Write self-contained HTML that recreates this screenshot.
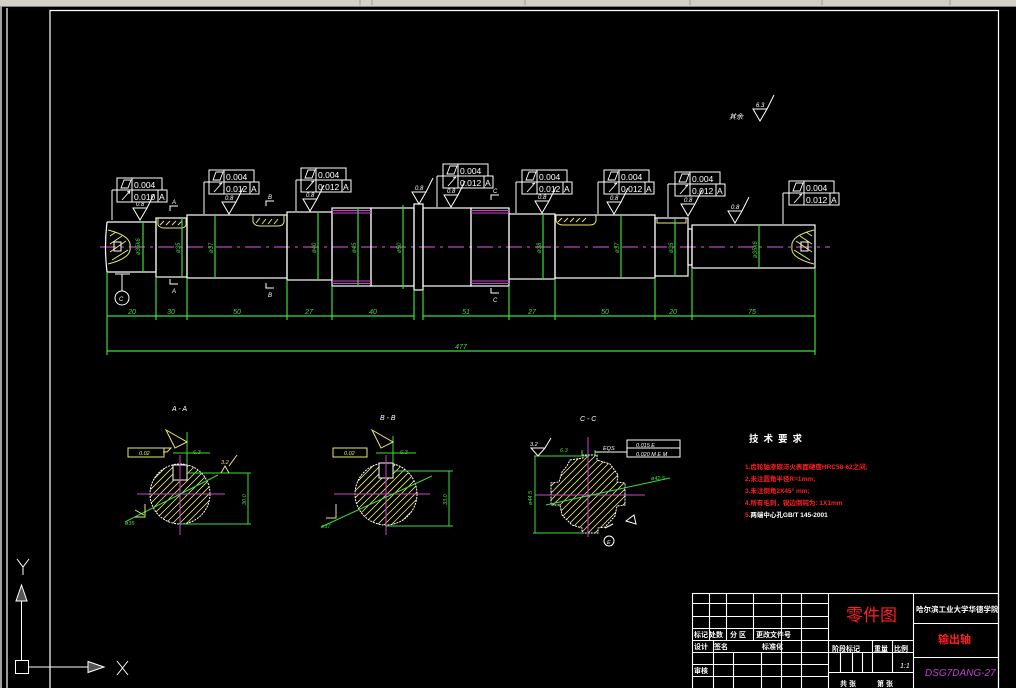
<!DOCTYPE html>
<html><head><meta charset="utf-8"><style>
html,body{margin:0;padding:0;background:#000;overflow:hidden}
svg{display:block}
text{font-family:"Liberation Sans","Noto Sans CJK SC",sans-serif}
</style></head><body>
<svg width="1016" height="688" viewBox="0 0 1016 688" xmlns="http://www.w3.org/2000/svg">
<rect width="1016" height="688" fill="#000"/>
<rect x="0" y="0" width="1016" height="6" fill="#d4d0c8"/>
<rect x="0" y="6" width="1016" height="1" fill="#808080"/>
<g stroke="#9a9a9a" stroke-width="1"><line x1="360" y1="0" x2="360" y2="5"/><line x1="372" y1="0" x2="372" y2="5"/><line x1="525" y1="0" x2="525" y2="5"/><line x1="690" y1="0" x2="690" y2="5"/><line x1="822" y1="0" x2="822" y2="5"/><line x1="950" y1="0" x2="950" y2="5"/></g>
<rect x="0" y="6" width="2" height="682" fill="#a0a0a0"/>
<g stroke="#fff" stroke-width="1.2" fill="none">
<line x1="7" y1="8" x2="7" y2="688"/>
<polyline points="50,688 50,10.5 998.5,10.5 998.5,688"/>
</g>
<g stroke="#fff" stroke-width="1" fill="none">
<rect x="15.5" y="660.5" width="13" height="13"/>
<line x1="21.5" y1="660" x2="21.5" y2="601"/>
<polygon points="21.5,585 16,601 27,601" fill="#555"/>
<line x1="28" y1="667" x2="88" y2="667"/>
<polygon points="104,667 88,661.5 88,672.5" fill="#555"/>
<path d="M17,559 L23,567 L29,559 M23,567 L23,575"/>
<path d="M117,661 L128,675 M128,661 L117,675"/>
</g>

<line x1="100" y1="247" x2="830" y2="247" stroke="#c040c0" stroke-width="1.2" stroke-dasharray="16,5,3,5"/>

<g stroke="#fff" stroke-width="1.2" fill="none">
<path d="M107,222 H156 V272 H107"/>
<path d="M107,222 Q104,247 107,272"/>
<rect x="156" y="218" width="31" height="59"/>
<rect x="187" y="215" width="100" height="63"/>
<rect x="287" y="212" width="45" height="68"/>
<rect x="332" y="208" width="39" height="78"/>
<rect x="371" y="208" width="43" height="78"/>
<rect x="414" y="204" width="9" height="86"/>
<rect x="423" y="208" width="48" height="78"/>
<rect x="471" y="208" width="38" height="78"/>
<rect x="509" y="214" width="46" height="65"/>
<rect x="555" y="215" width="100" height="63"/>
<rect x="655" y="218" width="33" height="58"/>
<rect x="688" y="229" width="4" height="36"/>
<rect x="692" y="225" width="123" height="43"/>
</g>
<g stroke="#e8e870" stroke-width="1" fill="none">
<path d="M108,230 Q132,236 130,247 Q132,258 108,264"/>
<path d="M110,236 L116,232 M110,244 L122,236 M110,252 L126,241 M112,260 L128,250"/>
<rect x="114" y="242" width="7" height="9" stroke="#fff"/>
<path d="M814,230 Q790,236 792,247 Q790,258 814,264"/>
<path d="M812,236 L806,232 M812,244 L800,236 M812,252 L796,241 M810,260 L794,250"/>
<rect x="801" y="242" width="7" height="9" stroke="#fff"/>
</g>
<g stroke="#e8e870" stroke-width="1" fill="none">
<path d="M158,218 V225 Q160,228 164,228 H181 Q185,228 186,225 V218"/>
<path d="M253,215 V222 Q255,226 260,226 H278 Q283,226 284,222 V215"/>
<path d="M556,215 V221 Q558,225 563,225 H590 Q595,225 596,221 V215"/>
<path d="M657,218 V223 H686 V218"/>
<path d="M160,225 L164,221 M166,225 L170,221 M172,225 L176,221 M178,225 L182,221 M256,223 L260,218 M262,224 L266,219 M268,224 L272,219 M274,224 L278,219 M558,222 L562,218 M564,222 L568,218 M570,222 L574,218 M576,222 L580,218 M582,222 L586,218"/>
</g>
<g stroke="#d040d0" stroke-width="1">
<line x1="332" y1="210.5" x2="371" y2="210.5"/><line x1="332" y1="213" x2="371" y2="213"/>
<line x1="332" y1="283.5" x2="371" y2="283.5"/><line x1="332" y1="281" x2="371" y2="281"/>
<line x1="471" y1="210.5" x2="509" y2="210.5"/><line x1="471" y1="213" x2="509" y2="213"/>
<line x1="471" y1="283.5" x2="509" y2="283.5"/><line x1="471" y1="281" x2="509" y2="281"/>
</g>

<g stroke="#3ddc3d" stroke-width="1.2" fill="#3ddc3d">
<line x1="143" y1="222" x2="143" y2="272"/><line x1="182" y1="218" x2="182" y2="277"/>
<line x1="215" y1="215" x2="215" y2="278"/><line x1="318" y1="212" x2="318" y2="280"/>
<line x1="358" y1="209" x2="358" y2="285"/><line x1="403" y1="205" x2="403" y2="289"/>
<line x1="543" y1="214" x2="543" y2="279"/><line x1="621" y1="215" x2="621" y2="278"/>
<line x1="675" y1="218" x2="675" y2="276"/><line x1="759" y1="225" x2="759" y2="268"/>
</g>
<g fill="#3ddc3d" font-size="6" font-style="italic">
<text transform="translate(140,255) rotate(-90)">ø35k6</text>
<text transform="translate(180,253) rotate(-90)">ø35</text>
<text transform="translate(213,253) rotate(-90)">ø37</text>
<text transform="translate(316,253) rotate(-90)">ø40</text>
<text transform="translate(356,253) rotate(-90)">ø45</text>
<text transform="translate(401,253) rotate(-90)">ø50</text>
<text transform="translate(541,253) rotate(-90)">ø38</text>
<text transform="translate(619,253) rotate(-90)">ø37</text>
<text transform="translate(673,253) rotate(-90)">ø35</text>
<text transform="translate(757,258) rotate(-90)">ø35k6</text>
</g>
<g stroke="#3ddc3d" stroke-width="1.2">
<line x1="107" y1="272" x2="107" y2="355"/>
<line x1="156" y1="277" x2="156" y2="320"/><line x1="187" y1="278" x2="187" y2="320"/>
<line x1="287" y1="280" x2="287" y2="320"/><line x1="332" y1="286" x2="332" y2="320"/>
<line x1="414" y1="290" x2="414" y2="320"/><line x1="423" y1="290" x2="423" y2="320"/>
<line x1="509" y1="286" x2="509" y2="320"/><line x1="555" y1="279" x2="555" y2="320"/>
<line x1="655" y1="278" x2="655" y2="320"/><line x1="692" y1="268" x2="692" y2="320"/>
<line x1="815" y1="268" x2="815" y2="355"/>
<line x1="107" y1="316" x2="414" y2="316"/><line x1="423" y1="316" x2="815" y2="316"/>
<line x1="107" y1="351" x2="815" y2="351"/>
</g>
<g fill="#3ddc3d" font-size="7" font-style="italic" text-anchor="middle">
<text x="132" y="314">20</text><text x="171" y="314">30</text><text x="237" y="314">50</text>
<text x="309" y="314">27</text><text x="373" y="314">40</text><text x="466" y="314">51</text>
<text x="532" y="314">27</text><text x="605" y="314">50</text><text x="673" y="314">20</text>
<text x="752" y="314">75</text><text x="461" y="349">477</text>
</g>

<g stroke="#fff" stroke-width="1" fill="none">
<path d="M117,178 h45 v12 h5 v12 h-50 z M117,190 h45 M132,178 v24 M158,190 v12 M112,190 h5 M112,190 v30"/>
<path d="M209,170 h45 v12 h5 v12 h-50 z M209,182 h45 M224,170 v24 M250,182 v12 M204,182 h5 M204,182 v32"/>
<path d="M301,168 h45 v12 h5 v12 h-50 z M301,180 h45 M316,168 v24 M342,180 v12 M296,180 h5 M296,180 v31"/>
<path d="M443,164 h45 v12 h5 v12 h-50 z M443,176 h45 M458,164 v24 M484,176 v12 M437,176 h6 M437,176 v31"/>
<path d="M522,170 h45 v12 h5 v12 h-50 z M522,182 h45 M537,170 v24 M563,182 v12 M516,182 h6 M516,182 v31"/>
<path d="M604,170 h45 v12 h5 v12 h-50 z M604,182 h45 M619,170 v24 M645,182 v12 M598,182 h6 M598,182 v32"/>
<path d="M675,172 h45 v12 h5 v12 h-50 z M675,184 h45 M690,172 v24 M716,184 v12 M668,184 h7 M668,184 v33"/>
<path d="M789,181 h45 v12 h5 v12 h-50 z M789,193 h45 M804,181 v24 M830,193 v12 M783,193 h6 M783,193 v31"/>
</g>
<g stroke="#fff" stroke-width="0.9" fill="none">
<path d="M121,188 l3,-8 h7 l-3,8 z M122,200 l8,-9 M130,191 l-3,1 M130,191 l-1,3"/>
<path d="M213,180 l3,-8 h7 l-3,8 z M214,192 l8,-9 M222,183 l-3,1"/>
<path d="M305,178 l3,-8 h7 l-3,8 z M306,190 l8,-9 M314,181 l-3,1"/>
<path d="M447,174 l3,-8 h7 l-3,8 z M448,186 l8,-9 M456,177 l-3,1"/>
<path d="M526,180 l3,-8 h7 l-3,8 z M527,192 l8,-9 M535,183 l-3,1"/>
<path d="M608,180 l3,-8 h7 l-3,8 z M609,192 l8,-9 M617,183 l-3,1"/>
<path d="M679,182 l3,-8 h7 l-3,8 z M680,194 l8,-9 M688,185 l-3,1"/>
<path d="M793,191 l3,-8 h7 l-3,8 z M794,203 l8,-9 M802,194 l-3,1"/>
</g>
<g fill="#fff" font-size="8.5">
<text x="134" y="188">0.004</text><text x="134" y="200">0.010</text><text x="159" y="200">A</text>
<text x="226" y="180">0.004</text><text x="226" y="192">0.012</text><text x="251" y="192">A</text>
<text x="318" y="178">0.004</text><text x="318" y="190">0.012</text><text x="343" y="190">A</text>
<text x="460" y="174">0.004</text><text x="460" y="186">0.012</text><text x="485" y="186">A</text>
<text x="539" y="180">0.004</text><text x="539" y="192">0.012</text><text x="564" y="192">A</text>
<text x="621" y="180">0.004</text><text x="621" y="192">0.012</text><text x="646" y="192">A</text>
<text x="692" y="182">0.004</text><text x="692" y="194">0.012</text><text x="717" y="194">A</text>
<text x="806" y="191">0.004</text><text x="806" y="203">0.012</text><text x="831" y="203">A</text>
</g>
<g stroke="#fff" stroke-width="1" fill="none">
<path d="M133,208 h14 l-7,12 z M147,208 l7,-14"/>
<path d="M222,202 h14 l-7,12 z M236,202 l7,-14"/>
<path d="M303,199 h14 l-7,12 z M317,199 l7,-14"/>
<path d="M412,192 h14 l-7,12 z M426,192 l7,-14"/>
<path d="M444,195 h14 l-7,12 z M458,195 l7,-14"/>
<path d="M535,201 h14 l-7,12 z M549,201 l7,-14"/>
<path d="M607,202 h14 l-7,12 z M621,202 l7,-14"/>
<path d="M681,204 h14 l-7,12 z M695,204 l7,-14"/>
<path d="M728,211 h14 l-7,12 z M742,211 l7,-14"/>
<path d="M753,109 h14 l-7,12 z M767,109 l7,-14"/>
</g>
<g fill="#fff" font-size="6" font-style="italic">
<text x="136" y="206">0.8</text><text x="225" y="200">0.8</text><text x="306" y="197">0.8</text>
<text x="415" y="190">0.8</text><text x="447" y="193">0.8</text><text x="538" y="199">0.8</text>
<text x="610" y="200">0.8</text><text x="684" y="202">0.8</text><text x="731" y="209">0.8</text>
<text x="756" y="107">6.3</text>
<text x="729" y="119" font-size="7">其余</text>
</g>
<g stroke="#fff" stroke-width="1" fill="none">
<path d="M170,211 v-5 h8 M170,279 v5 h8 M266,206 v-5 h8 M266,283 v5 h8 M491,200 v-5 h8 M491,288 v5 h8"/>
<line x1="122" y1="274" x2="122" y2="291"/><line x1="115" y1="274" x2="130" y2="274"/>
<circle cx="122" cy="298" r="7"/>
</g>
<g fill="#fff" font-size="6" font-style="italic">
<text x="172" y="204">A</text><text x="172" y="293">A</text><text x="268" y="199">B</text><text x="268" y="297">B</text>
<text x="493" y="193">C</text><text x="493" y="302">C</text><text x="119" y="301">C</text>
</g>

<!-- Section A-A -->
<g>
<text x="172" y="411" fill="#fff" font-size="7" font-style="italic">A - A</text>
<clipPath id="ca"><circle cx="180" cy="494" r="30"/></clipPath>
<g clip-path="url(#ca)" stroke="#e8e870" stroke-width="0.8">
<path d="M100,540 l100,-100 M107,540 l100,-100 M114,540 l100,-100 M121,540 l100,-100 M128,540 l100,-100 M135,540 l100,-100 M142,540 l100,-100 M149,540 l100,-100 M156,540 l100,-100 M163,540 l100,-100 M170,540 l100,-100 M177,540 l100,-100 M184,540 l100,-100 M191,540 l100,-100 M198,540 l100,-100 M93,540 l100,-100 M86,540 l100,-100"/>
</g>
<circle cx="180" cy="494" r="30" fill="none" stroke="#fff" stroke-width="1" stroke-dasharray="2,1"/>
<rect x="173" y="465" width="14" height="15" fill="#000" stroke="#fff" stroke-width="1"/>
<g stroke="#d040d0" stroke-width="1"><line x1="137" y1="494" x2="225" y2="494"/><line x1="180" y1="455" x2="180" y2="535"/></g>
<g stroke="#3ddc3d" stroke-width="1" fill="none"><path d="M173,453 h37 M187,432 v33 M187,473 h64 M180,524 h71 M248,473 v51 M125,522 L218,475"/></g>
<g stroke="#e8e870" stroke-width="1" fill="none"><path d="M128,448 h43 l-4,4 h-4 M166,430 l21,12 l-12,6 z M221,473 l4,-7 l4,7 M229,466 l8,-11 M145,504 v13 h-10 M135,510 l9,5"/><rect x="128" y="448" width="36" height="9"/></g>
<g font-size="5.5" font-style="italic"><text x="139" y="455" fill="#e8e870">0.02</text><text x="193" y="454" fill="#3ddc3d">6.3</text><text x="221" y="464" fill="#e8e870">3.2</text><text x="125" y="525" fill="#3ddc3d">ø35</text><text transform="translate(246,505) rotate(-90)" fill="#3ddc3d">30.0</text></g>
</g>

<!-- Section B-B -->
<g>
<text x="380" y="420" fill="#fff" font-size="7" font-style="italic">B - B</text>
<clipPath id="cb"><circle cx="386" cy="494" r="31"/></clipPath>
<g clip-path="url(#cb)" stroke="#e8e870" stroke-width="0.8">
<path d="M292,540 l100,-100 M299,540 l100,-100 M306,540 l100,-100 M313,540 l100,-100 M320,540 l100,-100 M327,540 l100,-100 M334,540 l100,-100 M341,540 l100,-100 M348,540 l100,-100 M355,540 l100,-100 M362,540 l100,-100 M369,540 l100,-100 M376,540 l100,-100 M383,540 l100,-100 M390,540 l100,-100 M397,540 l100,-100 M404,540 l100,-100"/>
</g>
<circle cx="386" cy="494" r="31" fill="none" stroke="#fff" stroke-width="1" stroke-dasharray="2,1"/>
<rect x="379" y="463" width="14" height="15" fill="#000" stroke="#fff" stroke-width="1"/>
<g stroke="#d040d0" stroke-width="1"><line x1="334" y1="494" x2="430" y2="494"/><line x1="386" y1="455" x2="386" y2="535"/></g>
<g stroke="#3ddc3d" stroke-width="1" fill="none"><path d="M376,453 h40 M393,436 v27 M393,471 h60 M386,526 h67 M449,471 v55 M321,527 L432,476"/></g>
<g stroke="#e8e870" stroke-width="1" fill="none"><path d="M372,430 l21,12 l-12,6 z M336,504 v14 h-10"/><rect x="333" y="448" width="34" height="9"/></g>
<g font-size="5.5" font-style="italic"><text x="344" y="455" fill="#e8e870">0.02</text><text x="400" y="454" fill="#3ddc3d">6.3</text><text x="321" y="528" fill="#3ddc3d">ø37</text><text transform="translate(447,505) rotate(-90)" fill="#3ddc3d">33.0</text></g>
</g>

<!-- Section C-C -->
<g>
<text x="580" y="421" fill="#fff" font-size="7" font-style="italic">C - C</text>
<clipPath id="cc"><path d="M570,460 L583,458 L583,455 L597,455 L597,460 L610,464 L618,475 L617,482 L625,483 L625,505 L617,506 L615,516 L605,527 L598,528 L598,533 L582,533 L582,528 L572,525 L562,515 L560,505 L551,505 L551,483 L559,482 L562,472 L567,466 Z"/></clipPath>
<g clip-path="url(#cc)" stroke="#e8e870" stroke-width="0.8">
<path d="M480,550 l110,-110 M487,550 l110,-110 M494,550 l110,-110 M501,550 l110,-110 M508,550 l110,-110 M515,550 l110,-110 M522,550 l110,-110 M529,550 l110,-110 M536,550 l110,-110 M543,550 l110,-110 M550,550 l110,-110 M557,550 l110,-110 M564,550 l110,-110 M571,550 l110,-110 M578,550 l110,-110 M585,550 l110,-110 M592,550 l110,-110 M599,550 l110,-110 M606,550 l110,-110"/>
</g>
<path d="M570,460 L583,458 L583,455 L597,455 L597,460 L610,464 L618,475 L617,482 L625,483 L625,505 L617,506 L615,516 L605,527 L598,528 L598,533 L582,533 L582,528 L572,525 L562,515 L560,505 L551,505 L551,483 L559,482 L562,472 L567,466 Z" fill="none" stroke="#fff" stroke-width="1" stroke-dasharray="2,1"/>
<g stroke="#d040d0" stroke-width="1"><line x1="535" y1="495" x2="645" y2="495"/><line x1="588" y1="437" x2="588" y2="537"/></g>
<g stroke="#3ddc3d" stroke-width="1" fill="none"><path d="M534,456 h55 M535,456 v77 M533,533 h50 M546,505 L670,478 M582,450 v6 M595,450 v6"/></g>
<g stroke="#fff" stroke-width="1" fill="none"><path d="M595,452 h32 M531,448 h14 l-7,8 z M545,448 l6,-10 M626,521 l8,-6 l2,9 z M605,528 l8,-4"/><rect x="627" y="440" width="53" height="8"/><rect x="627" y="448" width="53" height="9"/><circle cx="609" cy="541" r="5"/></g>
<g font-size="5.5" font-style="italic"><text x="530" y="446" fill="#fff">3.2</text><text x="560" y="452" fill="#3ddc3d">6.3</text><text x="603" y="450" fill="#fff">EQS</text><text x="636" y="447" fill="#fff">0.015 E</text><text x="636" y="456" fill="#fff">0.020 M E M</text><text x="651" y="480" fill="#3ddc3d">ø42.5</text><text transform="translate(532,505) rotate(-90)" fill="#3ddc3d">ø44.5</text><text x="607" y="544" fill="#fff">E</text></g>
</g>

<text x="749" y="442" fill="#fff" font-size="9.5" font-weight="bold" letter-spacing="5">技术要求</text>
<g fill="#ff2020" font-size="6.5" font-weight="bold">
<text x="745" y="469">1.齿轮轴渗碳淬火表面硬度HRC58-62之间;</text>
<text x="745" y="481">2.未注圆角半径R=1mm;</text>
<text x="745" y="493">3.未注倒角2X45° mm;</text>
<text x="745" y="505">4.所有毛刺，锐边倒钝为: 1X1mm</text>
<text x="745" y="517">5.<tspan fill="#fff">两端中心孔GB/T 145-2001</tspan></text>
</g>

<g stroke="#fff" stroke-width="1.1" fill="none">
<rect x="692.5" y="593.5" width="306" height="100"/>
<line x1="828.5" y1="593" x2="828.5" y2="688"/><line x1="913.5" y1="593" x2="913.5" y2="688"/>
<path d="M692,603.5 H828 M692,616.5 H828 M692,628.5 H828 M692,640.5 H913 M692,652.5 H828 M692,664.5 H828 M692,676.5 H828"/>
<path d="M709.5,593 V640 M726.5,593 V640 M753.5,593 V640 M781.5,593 V688 M801.5,593 V688"/>
<path d="M713.5,640 V688 M733.5,652 V688 M761.5,652 V688"/>
<path d="M828,652.5 H913 M828,672.5 H913 M872.5,640 V672 M892.5,640 V672 M840.5,652 V672 M852.5,652 V672 M862.5,652 V672"/>
<path d="M913,623.5 H998 M913,657.5 H998"/>
</g>
<g fill="#fff" font-size="7" font-weight="bold">
<text x="694" y="637">标记</text><text x="709" y="637">处数</text><text x="730" y="637">分 区</text><text x="756" y="637">更改文件号</text>
<text x="694" y="649">设计</text><text x="714" y="649">签名</text><text x="762" y="649">标准化</text>
<text x="694" y="673">审核</text>
<text x="832" y="651">阶段标记</text><text x="874" y="651">重量</text><text x="894" y="651">比例</text>
<text x="900" y="668" font-weight="normal" font-style="italic">1:1</text>
<text x="840" y="686">共  张</text><text x="877" y="686">第  张</text>
<text x="916" y="612" font-size="7.5">哈尔滨工业大学华德学院</text>
</g>
<text x="846" y="621" fill="#ff2020" font-size="17" font-family="'Noto Serif CJK SC',serif">零件图</text>
<text x="938" y="643" fill="#ff2020" font-size="11" font-weight="bold">输出轴</text>
<text x="925" y="676" fill="#c040d0" font-size="10" font-style="italic">DSG7DANG-27</text>
</svg>
</body></html>
